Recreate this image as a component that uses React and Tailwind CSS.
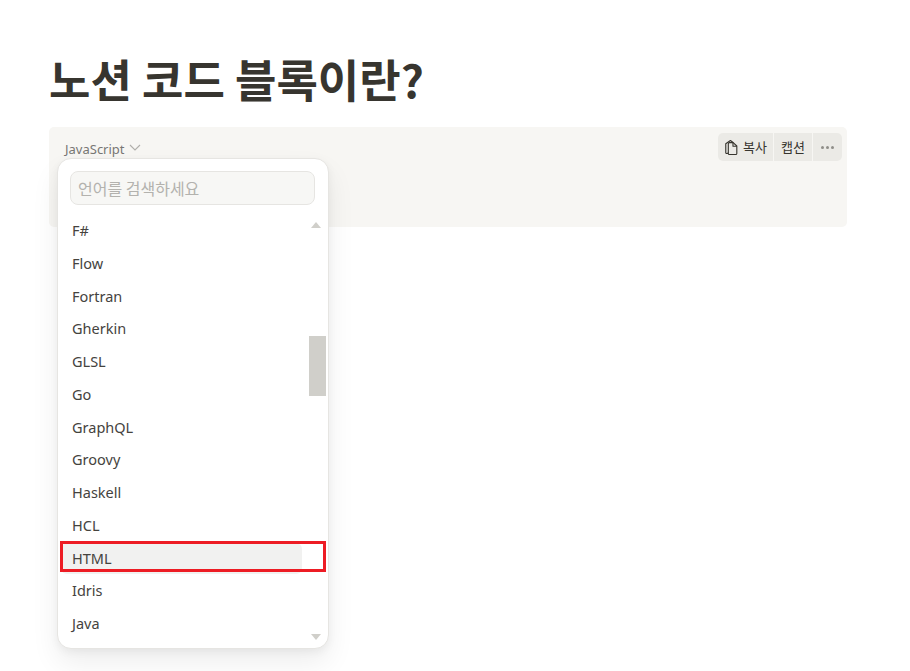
const items = ["F#","Flow","Fortran","Gherkin","GLSL","Go","GraphQL","Groovy","Haskell","HCL","HTML","Idris","Java"];
const sans = "font-['Noto_Sans','Noto_Sans_CJK_KR',sans-serif]";
const cjk = "font-['Noto_Sans_CJK_KR',sans-serif]";

function CopyIcon() {
  return (
    <svg width="17" height="17" viewBox="0 0 16 16" fill="none" stroke="#37352f" strokeWidth="1.05" strokeLinejoin="round">
      <path d="M2.6 4.4 L7 1.4 L9.2 3 V11 L4 13.6 A1 1 0 0 1 2.6 12.8 Z" />
      <path d="M6 3.4 H9.6 L13 6.6 V13.6 A1 1 0 0 1 12 14.6 H6 A1 1 0 0 1 5 13.6 V4.4 A1 1 0 0 1 6 3.4 Z" fill="#ebeae6" />
      <path d="M9.4 3.4 V6.8 H13" />
    </svg>
  );
}

export default function App() {
  return (
    <div className={`h-[671px] w-[910px] overflow-hidden bg-white pl-[49px] pt-[44px] ${sans}`}>
      <h1 className={`m-0 h-[70px] text-[45px] leading-[70px] font-bold text-[#37352f] ${cjk}`}>노션 코드 블록이란?</h1>
      <div className="relative mt-[13px] flex h-[100px] w-[798px] items-start justify-between rounded-[5px] bg-[#f7f6f3] pl-[16px] pr-[5px] pt-[6px]">
        <div className="flex h-[33px] items-center gap-[4px] text-[13px] text-[#787774]">
          <span>JavaScript</span>
          <svg className="mb-[4px]" width="12" height="12" viewBox="0 0 12 12" fill="none" stroke="#b0afab" strokeWidth="1.1"><path d="M1 3 L6 8 L11 3" /></svg>
        </div>
        <div className={`flex h-[28px] gap-[1px] text-[13px] text-[#37352f] ${cjk}`}>
          <div className="flex w-[55px] items-center gap-[3px] rounded-l-[5px] bg-[#ebeae6] pl-[5px]"><CopyIcon /><span>복사</span></div>
          <div className="flex w-[38px] items-center justify-center bg-[#ebeae6]">캡션</div>
          <div className="flex w-[29px] items-center justify-center gap-[2px] rounded-r-[5px] bg-[#ebeae6]">
            <span className="size-[3px] rounded-full bg-[#8f8e89]" />
            <span className="size-[3px] rounded-full bg-[#8f8e89]" />
            <span className="size-[3px] rounded-full bg-[#8f8e89]" />
          </div>
        </div>

        <div className="absolute left-[8px] top-[31px] flex h-[491px] w-[272px] flex-col overflow-hidden rounded-[14px] border border-[#e6e5e2] bg-white shadow-[0_14px_28px_rgba(15,15,15,0.07),0_3px_8px_rgba(15,15,15,0.05)]">
          <div className="pl-[12px] pt-[12px]">
            <div className={`flex h-[34px] w-[245px] items-center rounded-[8px] border border-[#e6e5e2] bg-[#f7f7f5] px-[7px] text-[16px] text-[#b3b2ae] ${cjk}`}>언어를 검색하세요</div>
          </div>
          <div className="relative flex-1 pt-[9px]">
            <div className="flex flex-col">
              {items.map((t) => (
                <div key={t} className="relative h-[32.75px] pl-[14px] text-[14.5px] leading-[32.75px] text-[#45433e]">
                  {t === "HTML" && <div className="absolute left-[3px] top-[1px] h-[31px] w-[241px] rounded-[6px] bg-[#f1f1f0]" />}
                  <span className="relative">{t}</span>
                  {t === "HTML" && <div className="absolute left-[2px] top-[-1px] h-[31px] w-[266px] border-[3px] border-[#ed1c24]" />}
                </div>
              ))}
            </div>
            <div className="absolute right-[7px] top-[0px] mt-[17px] h-0 w-0 border-x-[5px] border-b-[6px] border-x-transparent border-b-[#d0cfca]" />
            <div className="absolute right-[2px] top-[131px] h-[60px] w-[17px] bg-[#d0cfca]" />
            <div className="absolute bottom-[8px] right-[7px] h-0 w-0 border-x-[5px] border-t-[6px] border-x-transparent border-t-[#d0cfca]" />
          </div>
        </div>
      </div>
    </div>
  );
}
